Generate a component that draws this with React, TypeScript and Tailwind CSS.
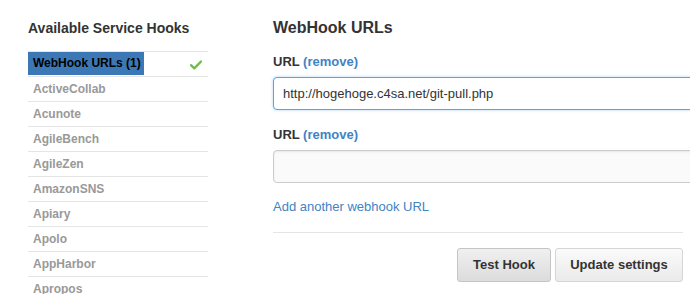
import React from "react";

const items = [
  "ActiveCollab",
  "Acunote",
  "AgileBench",
  "AgileZen",
  "AmazonSNS",
  "Apiary",
  "Apolo",
  "AppHarbor",
  "Apropos",
];

export default function App() {
  return (
    <div
      className="w-[690px] h-[294px] overflow-hidden bg-white flex text-[#333]"
      style={{ fontFamily: '"Liberation Sans", Arial, Helvetica, sans-serif' }}
    >
      <div className="ml-[28px] w-[180px] pt-[18px] shrink-0">
        <h3 className="text-[14px] font-bold leading-[20px] text-[#333]">Available Service Hooks</h3>
        <ul className="mt-[13px]">
          <li className="h-[25px] border-t border-[#e5e5e5] flex items-start justify-between">
            <span className="inline-block bg-[#3c78b5] text-black font-bold text-[12px] leading-[23px] pl-[5px] pr-[3px]">
              WebHook URLs (1)
            </span>
            <svg width="12" height="10" viewBox="0 0 12 10" className="mt-[8px] mr-[6px]">
              <path d="M1 5.2 L4.3 8.3 L11 1.5" fill="none" stroke="#6cc04a" strokeWidth="2.4" strokeLinecap="round" strokeLinejoin="round" />
            </svg>
          </li>
          {items.map((it) => (
            <li
              key={it}
              className="h-[25px] border-t border-[#e5e5e5] pl-[5px] text-[12px] font-bold leading-[24px] text-[#999]"
            >
              {it}
            </li>
          ))}
        </ul>
      </div>
      <div className="ml-[65px] w-[410px] shrink-0 pt-[18px]">
        <h2 className="text-[16px] font-bold leading-[20px] text-[#333]">WebHook URLs</h2>
        <div className="mt-[15px] text-[13px] font-bold leading-[18px] text-[#333]">
          URL <a className="text-[#4183c4]">(remove)</a>
        </div>
        <div className="mt-[6px] w-[440px] h-[33px] rounded-[4px] border border-[#51a7e8] bg-white shadow-[0_0_3px_rgba(81,167,232,0.5)] pl-[9px] flex items-center text-[13px] text-[#333]">
          http://hogehoge.c4sa.net/git-pull.php
        </div>
        <div className="mt-[16px] text-[13px] font-bold leading-[18px] text-[#333]">
          URL <a className="text-[#4183c4]">(remove)</a>
        </div>
        <div className="mt-[6px] w-[440px] h-[33px] rounded-[4px] border border-[#ccc] bg-[#fafafa] shadow-[inset_0_1px_2px_rgba(0,0,0,0.075)]" />
        <div className="mt-[15px] text-[13px] leading-[18px] text-[#4183c4]">Add another webhook URL</div>
        <div className="mt-[16px] h-px bg-[#e5e5e5]" />
        <div className="mt-[15px] flex justify-end gap-[4px]">
          <button className="h-[34px] w-[94px] rounded-[3px] border border-[#c5c5c5] bg-gradient-to-b from-[#f0f0f0] to-[#dcdcdc] text-[13px] font-bold text-[#333]">
            Test Hook
          </button>
          <button className="h-[34px] w-[128px] rounded-[3px] border border-[#d5d5d5] bg-gradient-to-b from-[#fafafa] to-[#eaeaea] text-[13px] font-bold text-[#333]">
            Update settings
          </button>
        </div>
      </div>
    </div>
  );
}
